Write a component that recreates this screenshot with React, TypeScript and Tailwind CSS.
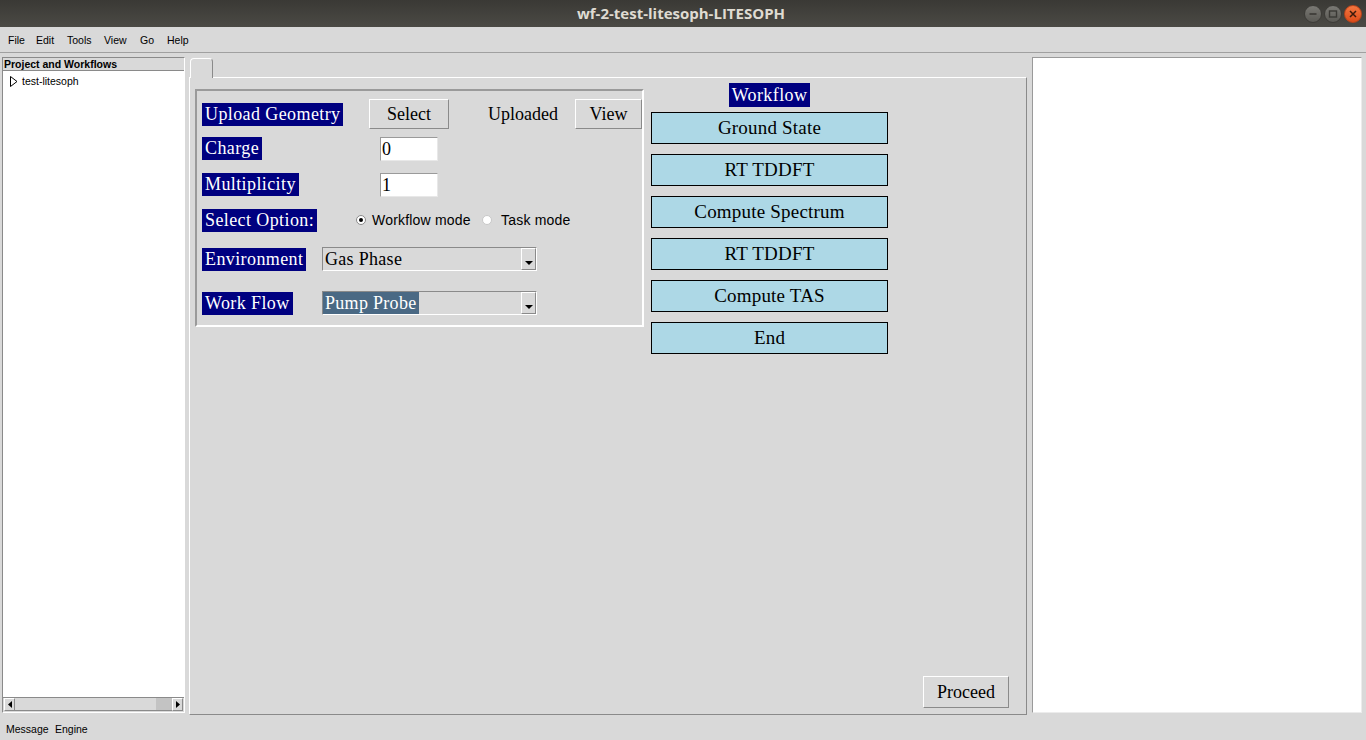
import { FunctionComponent, ReactNode } from 'react'

const serif = "font-['Liberation_Serif','Times_New_Roman',serif]"
const sans = "font-['Liberation_Sans',Arial,sans-serif]"

// widths keep each menu entry at the x it sits at in the Tk menubar
const menuItems = [
  { name: 'File', width: 'w-[28px]' },
  { name: 'Edit', width: 'w-[31px]' },
  { name: 'Tools', width: 'w-[37px]' },
  { name: 'View', width: 'w-[36px]' },
  { name: 'Go', width: 'w-[27px]' },
  { name: 'Help', width: 'w-[30px]' },
]

const workflowSteps = [
  'Ground State',
  'RT TDDFT',
  'Compute Spectrum',
  'RT TDDFT',
  'Compute TAS',
  'End',
]

const Label: FunctionComponent<{ children: ReactNode }> = ({ children }) => (
  <span
    className={`${serif} block h-[23px] w-fit whitespace-nowrap bg-[#000080] px-[3px] text-[18px] leading-[23px] tracking-[0.4px] text-white`}
  >
    {children}
  </span>
)

const RaisedButton: FunctionComponent<{ children: ReactNode; className?: string }> = ({
  children,
  className = '',
}) => (
  <button
    className={`${serif} flex items-center justify-center border border-b-[#8a8a8a] border-l-white border-r-[#8a8a8a] border-t-white bg-[#d9d9d9] text-[18px] text-black ${className}`}
  >
    {children}
  </button>
)

const Combo: FunctionComponent<{ value: string; selected?: boolean }> = ({
  value,
  selected,
}) => (
  <div className="flex h-[24px] w-[215px] border border-b-white border-l-[#8a8a8a] border-r-white border-t-[#8a8a8a] bg-[#d9d9d9]">
    <div className="flex flex-1 items-center">
      <span
        className={`${serif} h-[22px] px-[2px] text-[18px] leading-[22px] tracking-[0.3px] ${
          selected ? 'bg-[#4a6984] text-white' : 'text-black'
        }`}
      >
        {value}
      </span>
    </div>
    <div className="flex w-[15px] items-end justify-center border border-b-[#8a8a8a] border-l-white border-r-[#8a8a8a] border-t-white pb-[3px]">
      <svg width="8" height="5" viewBox="0 0 8 5">
        <path d="M0 0H8L4 4Z" fill="#000" />
      </svg>
    </div>
  </div>
)

const Radio: FunctionComponent<{ checked?: boolean; label: string; gap: string }> = ({
  checked,
  label,
  gap,
}) => (
  <div className="flex items-center">
    <span
      className={`flex h-[10px] w-[10px] items-center justify-center rounded-full border bg-white ${
        checked ? 'border-[#8a8a8a]' : 'border-[#c8c8c8]'
      }`}
    >
      {checked && <span className="h-[4px] w-[4px] rounded-full bg-black" />}
    </span>
    <span className={`${sans} ${gap} text-[14px] tracking-[0.2px] text-black`}>{label}</span>
  </div>
)

const Entry: FunctionComponent<{ value: string }> = ({ value }) => (
  <div
    className={`${serif} h-[24px] w-[58px] border border-b-[#e8e8e8] border-l-[#9a9a9a] border-r-[#e8e8e8] border-t-[#9a9a9a] bg-white pl-px text-[18px] leading-[22px] text-black`}
  >
    {value}
  </div>
)

const WindowButton: FunctionComponent<{ kind: 'min' | 'max' | 'close' }> = ({
  kind,
}) => (
  <div
    className={`flex h-[18px] w-[18px] items-center justify-center rounded-full border ${
      kind === 'close'
        ? 'border-[#b8431a] bg-linear-to-b from-[#f4763f] to-[#dc4a17]'
        : 'border-[#3c3b37] bg-linear-to-b from-[#7a7974] to-[#5a5954]'
    }`}
  >
    <svg width="10" height="10" viewBox="0 0 10 10">
      {kind === 'min' && <path d="M1.5 5H8.5" stroke="#3a3935" strokeWidth="1.6" />}
      {kind === 'max' && (
        <rect x="1.5" y="2" width="7" height="6" fill="none" stroke="#3a3935" strokeWidth="1.4" />
      )}
      {kind === 'close' && (
        <path d="M2 2L8 8M8 2L2 8" stroke="#3a1a0c" strokeWidth="1.5" />
      )}
    </svg>
  </div>
)

export default function App() {
  return (
    <div className={`${sans} flex h-[740px] w-[1366px] flex-col overflow-hidden bg-[#d9d9d9]`}>
      {/* title bar */}
      <div className="flex h-[27px] items-center bg-linear-to-b from-[#3a3935] to-[#4b4a45]">
        <div className="flex-1" />
        <span className="font-['Open_Sans',sans-serif] text-[15px] font-bold text-[#dfdbd2]">
          wf-2-test-litesoph-LITESOPH
        </span>
        <div className="flex flex-1 justify-end gap-[2px] pr-[4px]">
          <WindowButton kind="min" />
          <WindowButton kind="max" />
          <WindowButton kind="close" />
        </div>
      </div>

      {/* menu bar */}
      <div className="flex h-[26px] items-center border-b border-[#a0a0a0] pl-[8px] pt-[2px] text-[10.5px] text-black">
        {menuItems.map((item) => (
          <span key={item.name} className={item.width}>
            {item.name}
          </span>
        ))}
      </div>

      {/* panels */}
      <div className="flex h-[662px] pl-[2px] pt-[4px]">
        {/* project tree */}
        <div className="flex h-[656px] w-[183px] flex-col border border-b-white border-l-[#8a8a8a] border-r-white border-t-[#8a8a8a] bg-white">
          <div className="h-[13px] border-b border-[#8a8a8a] bg-[#d9d9d9] pl-px text-[10.5px] font-bold leading-[12px] text-black">
            Project and Workflows
          </div>
          <div className="flex-1">
            <div className="mt-[3px] flex items-center pl-[7px] text-[10.5px] text-black">
              <svg width="8" height="11" viewBox="0 0 8 11" className="mr-[4px]">
                <path d="M0.5 0.5L7 5.5L0.5 10.5Z" fill="#fff" stroke="#000" />
              </svg>
              test-litesoph
            </div>
          </div>
          <div className="flex h-[15px] border-t border-[#8a8a8a] bg-[#d9d9d9] px-px pb-px">
            <div className="flex w-[11px] items-center justify-center border border-b-[#8a8a8a] border-l-white border-r-[#8a8a8a] border-t-white">
              <svg width="4" height="7" viewBox="0 0 4 7">
                <path d="M4 0V7L0 3.5Z" fill="#000" />
              </svg>
            </div>
            <div className="flex flex-1 justify-end border-b border-[#8a8a8a]">
              <div className="w-[16px] bg-[#c3c3c3]" />
            </div>
            <div className="flex w-[11px] items-center justify-center border border-b-[#8a8a8a] border-l-white border-r-[#8a8a8a] border-t-white">
              <svg width="4" height="7" viewBox="0 0 4 7">
                <path d="M0 0V7L4 3.5Z" fill="#000" />
              </svg>
            </div>
          </div>
        </div>

        {/* notebook */}
        <div className="ml-[4px] flex w-[838px] flex-col">
          <div className="relative z-10 -mb-px ml-px mt-px h-[20px] w-[23px] rounded-t-[4px] border border-b-0 border-l-white border-r-[#8a8a8a] border-t-white bg-[#d9d9d9]" />
          <div className="flex h-[638px] flex-col border border-b-[#8a8a8a] border-l-white border-r-[#8a8a8a] border-t-white">
            <div className="flex items-start">
              {/* input frame */}
              <div className="ml-[5px] mt-[11px] flex w-[449px] flex-col border-2 border-b-white border-l-[#9a9a9a] border-r-white border-t-[#9a9a9a] pb-[10px] pl-[5px]">
                <div className="mt-[8px] flex h-[30px] items-center">
                  <div className="w-[167px]">
                    <Label>Upload Geometry</Label>
                  </div>
                  <RaisedButton className="h-[30px] w-[80px]">Select</RaisedButton>
                  <div className={`${serif} w-[126px] pl-[39px] text-[18px] text-black`}>
                    Uploaded
                  </div>
                  <RaisedButton className="h-[30px] w-[67px]">View</RaisedButton>
                </div>

                <div className="mt-[8px] flex h-[24px] items-start">
                  <div className="w-[178px]">
                    <Label>Charge</Label>
                  </div>
                  <Entry value="0" />
                </div>

                <div className="mt-[12px] flex h-[24px] items-start">
                  <div className="w-[178px]">
                    <Label>Multiplicity</Label>
                  </div>
                  <Entry value="1" />
                </div>

                <div className="mt-[11px] flex h-[24px] items-center">
                  <div className="w-[154px]">
                    <Label>Select Option:</Label>
                  </div>
                  <div className="w-[126px]">
                    <Radio checked label="Workflow mode" gap="ml-[6px]" />
                  </div>
                  <Radio label="Task mode" gap="ml-[9px]" />
                </div>

                <div className="mt-[15px] flex h-[24px] items-center">
                  <div className="w-[120px]">
                    <Label>Environment</Label>
                  </div>
                  <Combo value="Gas Phase" />
                </div>

                <div className="mt-[20px] flex h-[24px] items-center">
                  <div className="w-[120px]">
                    <Label>Work Flow</Label>
                  </div>
                  <Combo value="Pump Probe" selected />
                </div>
              </div>

              {/* workflow steps */}
              <div className="ml-[7px] mt-[5px] flex w-[237px] flex-col items-center">
                <span
                  className={`${serif} h-[24px] bg-[#000080] px-[3px] text-[18px] leading-[24px] tracking-[0.4px] text-white`}
                >
                  Workflow
                </span>
                <div className="mt-[5px] flex w-full flex-col gap-[10px]">
                  {workflowSteps.map((step, index) => (
                    <div
                      key={`step-${index}`}
                      className={`${serif} flex h-[32px] items-center justify-center border border-black bg-[#add8e6] text-[19px] tracking-[0.2px] text-black`}
                    >
                      {step}
                    </div>
                  ))}
                </div>
              </div>
            </div>

            <div className="flex-1" />
            <div className="mb-[6px] mr-[17px] flex justify-end">
              <RaisedButton className="h-[32px] w-[86px]">Proceed</RaisedButton>
            </div>
          </div>
        </div>

        {/* right panel */}
        <div className="ml-[5px] h-[656px] w-[330px] border border-b-[#ececec] border-l-[#9a9a9a] border-r-[#ececec] border-t-[#9a9a9a] bg-white" />
      </div>

      {/* status bar */}
      <div className="flex flex-1 items-center pl-[6px] pt-[4px] text-[10.5px] text-black">
        <span className="w-[49px]">Message</span>
        <span>Engine</span>
      </div>
    </div>
  )
}
